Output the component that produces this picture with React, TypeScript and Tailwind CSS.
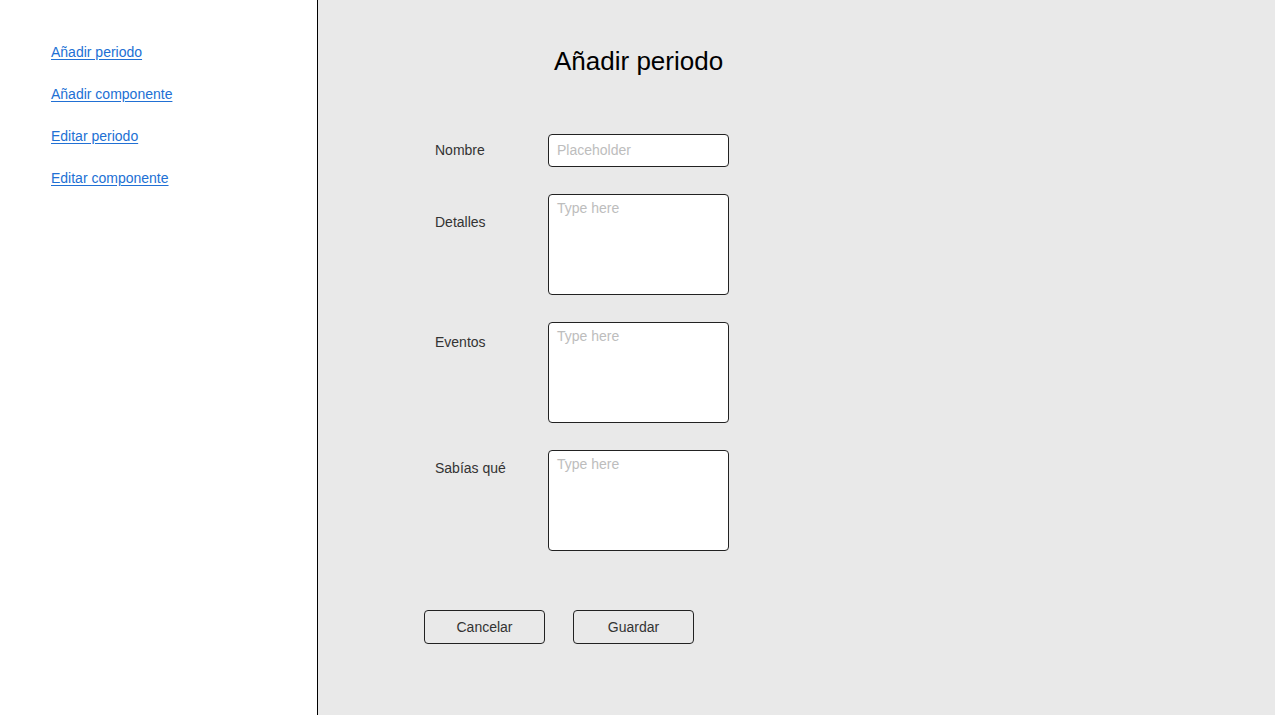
import React from 'react';

const links = ['Añadir periodo', 'Añadir componente', 'Editar periodo', 'Editar componente'];

const areas = [
  { label: 'Detalles', pad: 'pt-[20px]' },
  { label: 'Eventos', pad: 'pt-[12px]' },
  { label: 'Sabías qué', pad: 'pt-[10px]' },
];

export default function App() {
  return (
    <div className="flex h-[715px] w-full font-['Liberation_Sans',Arial,sans-serif] text-[14px] leading-[16px]">
      <aside className="w-[318px] shrink-0 border-r border-black bg-white pl-[51px] pt-[44px]">
        <nav className="flex flex-col gap-[26px]">
          {links.map((l) => (
            <a key={l} href="#" className="w-fit text-[#2170d4] underline underline-offset-2">
              {l}
            </a>
          ))}
        </nav>
      </aside>

      <main className="flex-1 bg-[#e9e9e9] pl-[106px] text-[#333]">
        <h1 className="ml-[130px] mt-[46px] text-[26px] leading-[30px] text-black">Añadir periodo</h1>

        <div className="mt-[58px] flex flex-col gap-[27px]">
          <div className="flex items-start">
            <label className="w-[124px] pl-[11px] pt-[8px]">Nombre</label>
            <input
              placeholder="Placeholder"
              className="h-[33px] w-[181px] rounded-[4px] border border-[#222] bg-white px-[8px] pb-[1px] outline-none placeholder:text-[#bdbdbd]"
            />
          </div>
          {areas.map((a) => (
            <div key={a.label} className="flex items-start">
              <label className={`w-[124px] pl-[11px] ${a.pad}`}>{a.label}</label>
              <textarea
                placeholder="Type here"
                className="h-[101px] w-[181px] resize-none rounded-[4px] border border-[#222] bg-white px-[8px] pt-[5px] outline-none placeholder:text-[#bdbdbd]"
              />
            </div>
          ))}
        </div>

        <div className="mt-[59px] flex gap-[28px]">
          <button className="h-[34px] w-[121px] rounded-[4px] border border-[#222] text-[#333]">Cancelar</button>
          <button className="h-[34px] w-[121px] rounded-[4px] border border-[#222] text-[#333]">Guardar</button>
        </div>
      </main>
    </div>
  );
}
